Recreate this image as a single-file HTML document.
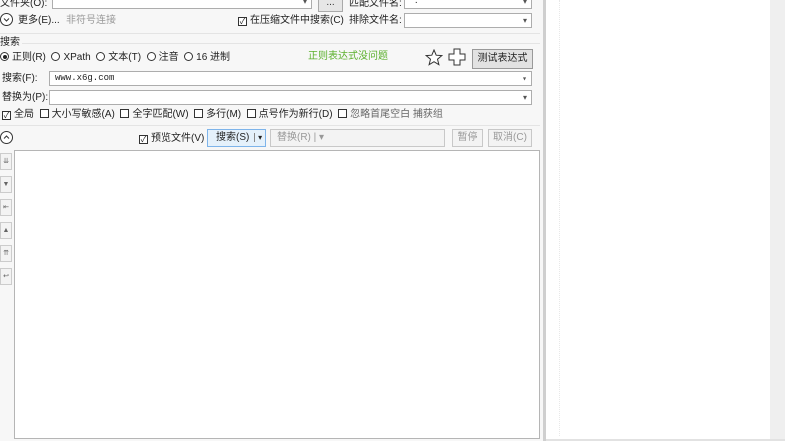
<!DOCTYPE html>
<html><head><meta charset="utf-8"><style>
*{box-sizing:border-box;margin:0;padding:0}
body{width:785px;height:441px;overflow:hidden;background:#f7f7f7;font-family:"Liberation Sans","Noto Sans CJK SC",sans-serif;font-size:10px;line-height:12px;color:#222;position:relative}
.a{position:absolute;white-space:nowrap}
.inp{position:absolute;background:#fff;border:1px solid #adadad;height:15px}
.dd::after{content:"▾";position:absolute;right:4px;top:1px;font-size:8px;color:#555}
.cb{display:inline-block;width:9px;height:9px;border:1px solid #333;background:#fff;vertical-align:-1px;margin-right:3px;font-size:8px;line-height:7px;text-align:center}
.rb{display:inline-block;width:9px;height:9px;border:1px solid #333;border-radius:50%;background:#fff;vertical-align:-1px;margin-right:3px;position:relative}
.rb.on::after{content:"";position:absolute;left:1.5px;top:1.5px;width:4px;height:4px;border-radius:50%;background:#222}
.btn{position:absolute;border:1px solid #c8c8c8;background:#f3f3f3;color:#999;text-align:center;height:18px;line-height:16px}
.side{position:absolute;left:0;width:12px;height:17px;border:1px solid #ccc;background:#f3f3f3;font-size:7px;color:#666;text-align:center;line-height:15px}
.circ{position:absolute;width:13px;height:13px;border:1px solid #333;border-radius:50%;background:#fff}
</style></head><body>
<div class="a" style="left:543px;top:0;width:3px;height:441px;background:#cfcfcf"></div>
<div class="a" style="left:546px;top:0;width:239px;height:441px;background:#fff"></div>
<div class="a" style="left:559px;top:0;width:1px;height:436px;border-left:1px dotted #e8e8e8"></div>
<div class="a" style="left:770px;top:0;width:15px;height:441px;background:#efefef"></div>
<div class="a" style="left:546px;top:439px;width:239px;height:2px;background:#e2e2e2"></div>

<div class="a" style="left:0;top:-2px">文件夹(O):</div>
<div class="inp dd" style="left:52px;top:-6px;width:260px"></div>
<div class="btn" style="left:318px;top:-6px;width:25px;color:#333;background:#e6e6e6;border-color:#aaa">...</div>
<div class="a" style="left:349px;top:-2px">匹配文件名:</div>
<div class="inp dd" style="left:404px;top:-6px;width:128px;padding-left:6px;line-height:12px">*.*</div>

<div class="circ" style="left:0;top:13px"><svg width="11" height="11" style="position:absolute;left:0;top:0"><path d="M3 4.5l2.5 2.5 2.5-2.5" fill="none" stroke="#333"/></svg></div>
<div class="a" style="left:18px;top:15px">更多(E)...</div>
<div class="a" style="left:66px;top:15px;color:#999">非符号连接</div>
<div class="a" style="left:238px;top:15px"><span class="cb">✓</span>在压缩文件中搜索(C)</div>
<div class="a" style="left:349px;top:15px">排除文件名:</div>
<div class="inp dd" style="left:404px;top:13px;width:128px"></div>
<div class="a" style="left:0;top:33px;width:540px;height:1px;background:#e4e4e4"></div>

<div class="a" style="left:0;top:37px">搜索</div>
<div class="a" style="left:22px;top:43px;width:518px;height:1px;background:#e4e4e4"></div>
<div class="a" style="left:0;top:52px"><span class="rb on"></span>正则(R)&nbsp;&nbsp;<span class="rb"></span>XPath&nbsp;&nbsp;<span class="rb"></span>文本(T)&nbsp;&nbsp;<span class="rb"></span>注音&nbsp;&nbsp;<span class="rb"></span>16 进制</div>
<div class="a" style="left:308px;top:51px;color:#5bb02c">正则表达式没问题</div>
<svg class="a" style="left:425px;top:49px" width="18" height="18"><path d="M9 1l2.2 5.2 5.6.4-4.3 3.6 1.4 5.5L9 12.7 4.1 15.7l1.4-5.5L1.2 6.6l5.6-.4z" fill="#fff" stroke="#333"/></svg>
<svg class="a" style="left:448px;top:48px" width="18" height="18"><path d="M6 1h6v5h5v6h-5v5h-6v-5h-5v-6h5z" fill="#fff" stroke="#333"/></svg>
<div class="btn" style="left:472px;top:49px;width:61px;height:20px;line-height:18px;color:#222;background:#e2e2e2;border-color:#999">测试表达式</div>

<div class="a" style="left:2px;top:73px">搜索(F):</div>
<div class="inp dd" style="left:49px;top:71px;width:483px;font-family:'Liberation Mono',monospace;font-size:9px;padding-left:5px;line-height:13px">www.x6g.com</div>
<div class="a" style="left:2px;top:92px">替换为(P):</div>
<div class="inp dd" style="left:49px;top:90px;width:483px"></div>

<div class="a" style="left:2px;top:109px"><span class="cb">✓</span>全局&nbsp;&nbsp;<span class="cb"></span>大小写敏感(A)&nbsp;&nbsp;<span class="cb"></span>全字匹配(W)&nbsp;&nbsp;<span class="cb"></span>多行(M)&nbsp;&nbsp;<span class="cb"></span>点号作为新行(D)&nbsp;&nbsp;<span class="cb"></span><span style="color:#666">忽略首尾空白 捕获组</span></div>
<div class="a" style="left:0;top:125px;width:540px;height:1px;background:#e4e4e4"></div>

<div class="circ" style="left:0;top:131px"><svg width="11" height="11" style="position:absolute;left:0;top:0"><path d="M3 6.5l2.5-2.5 2.5 2.5" fill="none" stroke="#333"/></svg></div>
<div class="a" style="left:139px;top:133px"><span class="cb">✓</span>预览文件(V)</div>
<div class="btn" style="left:207px;top:129px;width:59px;color:#222;background:#e5f1fb;border-color:#7eb4ea;text-align:left;padding-left:8px">搜索(S) <span style="border-left:1px solid #888;padding-left:3px;margin-left:2px;font-size:8px">▾</span></div>
<div class="btn" style="left:270px;top:129px;width:175px;text-align:left;padding-left:6px">替换(R) | ▾</div>
<div class="btn" style="left:452px;top:129px;width:31px">暂停</div>
<div class="btn" style="left:488px;top:129px;width:44px">取消(C)</div>

<div class="a" style="left:14px;top:150px;width:526px;height:289px;background:#fff;border:1px solid #b5b5b5"></div>
<div class="side" style="top:153px">⇊</div>
<div class="side" style="top:176px">▼</div>
<div class="side" style="top:199px">⇤</div>
<div class="side" style="top:222px">▲</div>
<div class="side" style="top:245px">⇈</div>
<div class="side" style="top:268px">↩</div>
</body></html>
